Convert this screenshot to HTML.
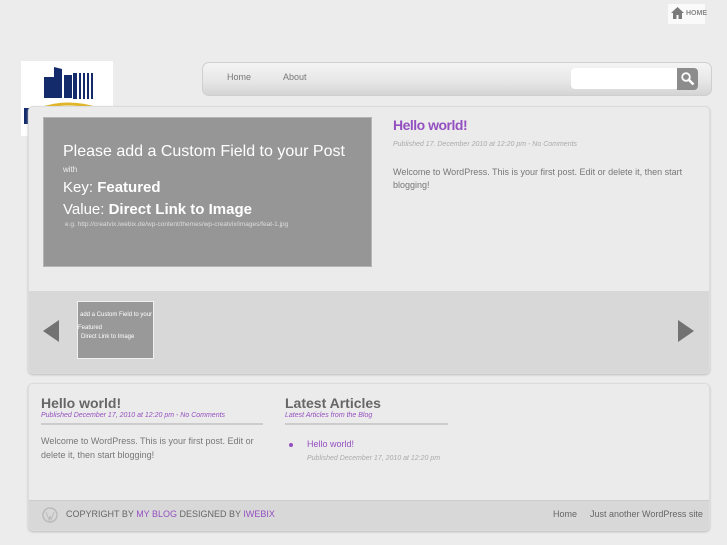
<!DOCTYPE html>
<html><head><style>
*{margin:0;padding:0;box-sizing:border-box}
body{width:727px;height:545px;background:#ececec;font-family:"Liberation Sans",sans-serif;position:relative;overflow:hidden}
.a{position:absolute}
</style></head><body>
<div class="a" style="left:668px;top:4px;width:37px;height:20px;background:#fafafa"></div>
<svg class="a" style="left:671px;top:7px" width="13" height="12" viewBox="0 0 13 12"><path d="M6.5 0L0 6h2v6h3.5V8h2v4H11V6h2z" fill="#7a7a7a"/></svg>
<div class="a" style="left:686px;top:10px;font-size:7px;color:#888;font-weight:bold">HOME</div>

<div class="a" style="left:21px;top:61px;width:92px;height:75px;background:#fff"></div>
<svg class="a" style="left:40px;top:63px" width="60" height="45" viewBox="0 0 60 45">
<path d="M4 14h10v21H4zM14 4l8 2v29h-8zM24 12h8v23h-8zM33 10h4v26h-4zM39 10h2v26h-2zM43 10h2v26h-2zM47 10h2v26h-2zM51 10h2v26h-2z" fill="#132a6b"/>
<path d="M0 46Q28 36 58 46" stroke="#e0b528" stroke-width="3" fill="none"/></svg>
<div class="a" style="left:24px;top:108px;width:5px;height:16px;background:#132a6b"></div>

<div class="a" style="left:202px;top:62px;width:510px;height:34px;border-radius:7px;border:1px solid #cfcfcf;background:linear-gradient(#f4f4f4,#e6e6e6 60%,#d4d4d4)"></div>
<div class="a" style="left:227px;top:72px;font-size:9px;color:#777">Home</div>
<div class="a" style="left:283px;top:72px;font-size:9px;color:#777">About</div>
<div class="a" style="left:571px;top:68px;width:108px;height:21px;background:#fff;border-radius:4px"></div>
<div class="a" style="left:677px;top:68px;width:21px;height:22px;background:#8c8c8c;border-radius:0 4px 4px 0"></div>
<svg class="a" style="left:680px;top:71px" width="15" height="15" viewBox="0 0 15 15"><circle cx="6" cy="6" r="3.8" stroke="#fff" stroke-width="1.8" fill="none"/><path d="M9 9l4.5 4.5" stroke="#fff" stroke-width="2.5"/></svg>

<div class="a" style="left:28px;top:106px;width:682px;height:268px;border-radius:5px;background:#ebebeb;border:1px solid #dcdcdc;overflow:hidden;box-shadow:0 1px 2px #bbb">
<div class="a" style="left:0;top:184px;width:682px;height:84px;background:#d8d8d8"></div>
</div>
<div class="a" style="left:43px;top:117px;width:329px;height:150px;background:#969696;border:1px solid #b5b5b5"></div>
<div class="a" style="left:63px;top:143px;font-size:16px;color:#fff">Please add a Custom Field to your Post</div>
<div class="a" style="left:63px;top:165px;font-size:8px;color:#eee">with</div>
<div class="a" style="left:63px;top:179px;font-size:15px;color:#fff">Key: <b>Featured</b></div>
<div class="a" style="left:63px;top:201px;font-size:15px;color:#fff">Value: <b>Direct Link to Image</b></div>
<div class="a" style="left:65px;top:221px;font-size:6.5px;color:#ddd">e.g. http://creatvix.iwebix.de/wp-content/themes/wp-creatvix/images/feat-1.jpg</div>

<div class="a" style="left:393px;top:117px;font-size:14px;font-weight:bold;color:#9450c0;letter-spacing:-0.5px">Hello world!</div>
<div class="a" style="left:393px;top:141px;font-size:7px;font-style:italic;color:#aaa">Published 17. December 2010 at 12:20 pm - No Comments</div>
<div class="a" style="left:393px;top:166px;width:300px;font-size:9px;line-height:13px;color:#777">Welcome to WordPress. This is your first post. Edit or delete it, then start blogging!</div>

<div class="a" style="left:77px;top:301px;width:77px;height:58px;background:#999;border:1px solid #f0f0f0;overflow:hidden;color:#fff;font-size:6px">
<div class="a" style="left:-3px;top:10px;white-space:nowrap">e add a Custom Field to your</div>
<div class="a" style="left:0;top:23px">Featured</div>
<div class="a" style="left:3px;top:32px;white-space:nowrap">Direct Link to Image</div></div>
<svg class="a" style="left:42px;top:319px" width="18" height="24"><path d="M17 1L1 12l16 11z" fill="#727272"/></svg>
<svg class="a" style="left:677px;top:319px" width="18" height="24"><path d="M1 1l16 11L1 23z" fill="#727272"/></svg>

<div class="a" style="left:28px;top:383px;width:682px;height:148px;border-radius:5px;background:#ebebeb;border:1px solid #dcdcdc;overflow:hidden;box-shadow:0 1px 2px #bbb">
<div class="a" style="left:0;top:116px;width:682px;height:32px;background:#d8d8d8;border-top:1px solid #ccc"></div>
</div>
<div class="a" style="left:41px;top:395px;font-size:14px;font-weight:bold;color:#666">Hello world!</div>
<div class="a" style="left:41px;top:412px;font-size:7px;font-style:italic;color:#9450c0">Published December 17, 2010 at 12:20 pm - No Comments</div>
<div class="a" style="left:41px;top:423px;width:222px;height:2px;background:#ccc"></div>
<div class="a" style="left:41px;top:434px;width:225px;font-size:9px;line-height:14px;color:#777">Welcome to WordPress. This is your first post. Edit or delete it, then start blogging!</div>
<div class="a" style="left:285px;top:395px;font-size:14px;font-weight:bold;color:#666">Latest Articles</div>
<div class="a" style="left:285px;top:412px;font-size:7px;font-style:italic;color:#9450c0">Latest Articles from the Blog</div>
<div class="a" style="left:285px;top:423px;width:163px;height:2px;background:#ccc"></div>
<div class="a" style="left:289px;top:443px;width:4px;height:4px;border-radius:2px;background:#9450c0"></div>
<div class="a" style="left:307px;top:439px;font-size:9px;color:#9450c0">Hello world!</div>
<div class="a" style="left:307px;top:455px;font-size:7px;font-style:italic;color:#aaa">Published December 17, 2010 at 12:20 pm</div>

<svg class="a" style="left:42px;top:507px" width="16" height="16"><circle cx="8" cy="8" r="7" fill="none" stroke="#bbb" stroke-width="1.5"/><path d="M4 5l3 8 1-4 1 4 3-8" stroke="#bbb" fill="none"/></svg>
<div class="a" style="left:66px;top:509px;font-size:9px;color:#666">COPYRIGHT BY <span style="color:#9450c0">MY BLOG</span> DESIGNED BY <span style="color:#9450c0">IWEBIX</span></div>
<div class="a" style="left:553px;top:509px;font-size:9px;color:#666">Home</div>
<div class="a" style="left:590px;top:509px;font-size:9px;color:#666">Just another WordPress site</div>
</body></html>
